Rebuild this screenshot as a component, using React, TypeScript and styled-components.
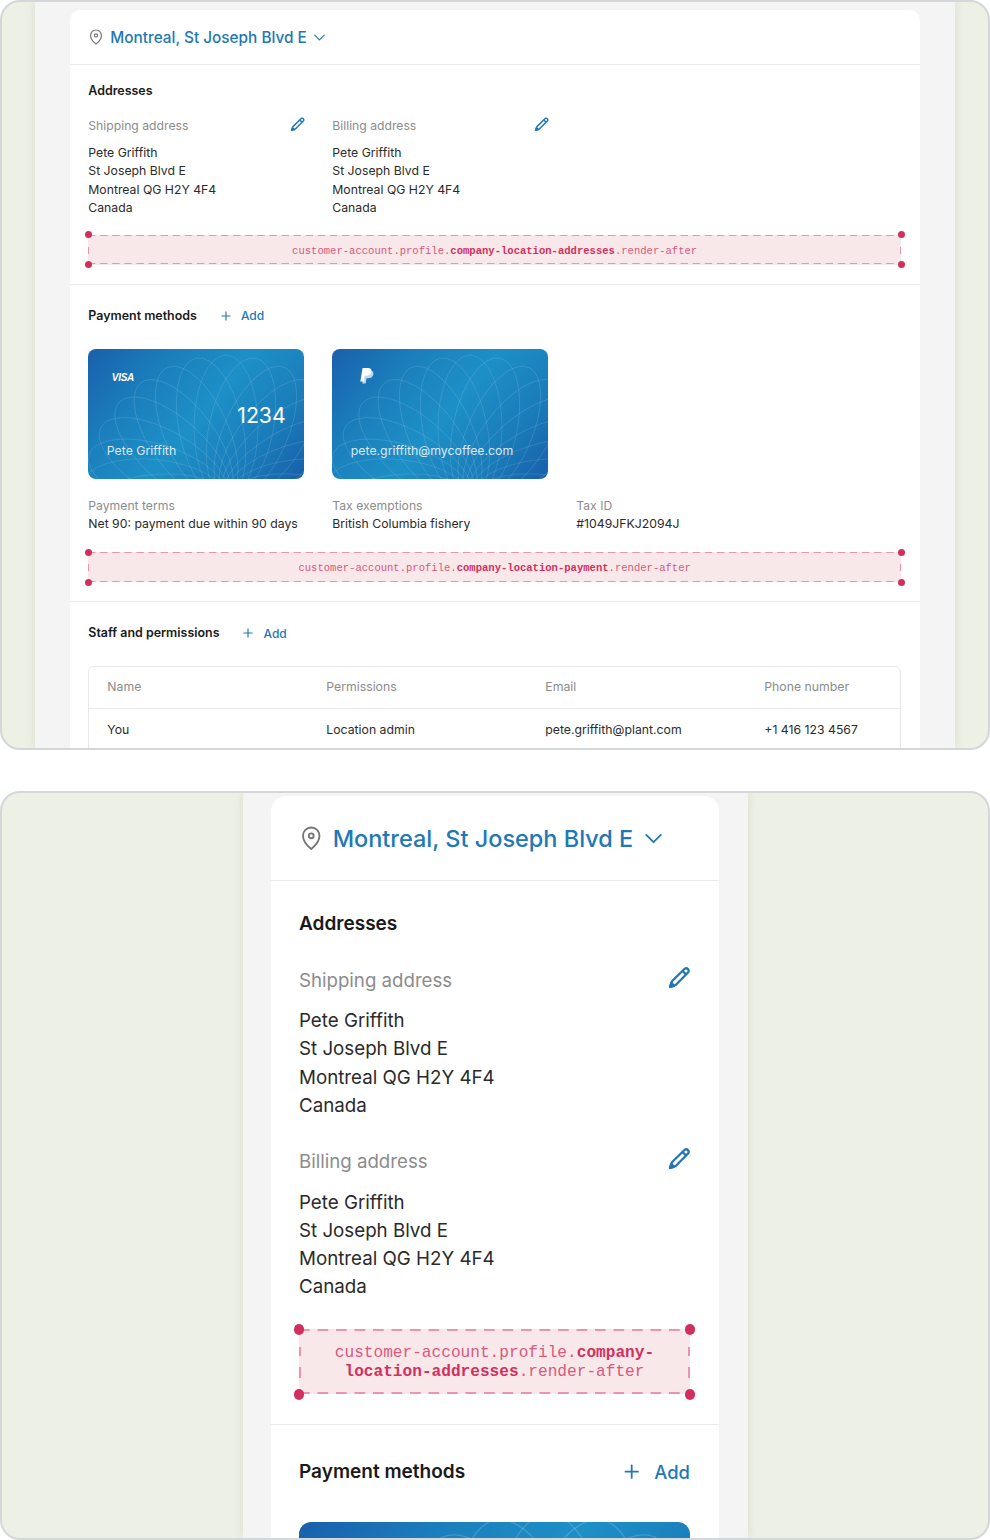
import React from "react";
import styled, { createGlobalStyle } from "styled-components";
import { ChevronDown, Plus } from "lucide-react";

const u = (n: number) => `calc(var(--s) * ${n}px)`;

const Global = createGlobalStyle`
  html, body { margin: 0; padding: 0; background: #fff; }
  * { box-sizing: border-box; }
  body { font-family: Inter, "Liberation Sans", sans-serif; }
`;

const Page = styled.div`
  width: 990px;
  display: flex;
  flex-direction: column;
  gap: 41px;
`;

const Frame = styled.section<{ $mobile?: boolean }>`
  --s: ${(p) => (p.$mobile ? 1.53 : 1)};
  --first: ${(p) => (p.$mobile ? "29px" : "17px")};
  --head: ${(p) => (p.$mobile ? "84px" : "54px")};
  --gap: ${(p) => (p.$mobile ? "29px" : "17px")};
  --banner-gap: ${(p) => (p.$mobile ? "28px" : "17px")};
  --label-gap: ${(p) => (p.$mobile ? "13px" : "9px")};
  --dash: #ea94ad;
  --side-dash: ${(p) =>
    p.$mobile
      ? "transparent 27%, var(--dash) 27% 42%, transparent 42% 59%, var(--dash) 59% 75%, transparent 75%"
      : "transparent 40%, var(--dash) 40% 63%, transparent 63%"};
  height: ${(p) => (p.$mobile ? "749px" : "750px")};
  border: 2px solid #d4d7d9;
  border-radius: 20px;
  background: #edf0e4;
  overflow: hidden;
  display: flex;
  justify-content: center;
  color: #242424;
`;

const Panel = styled.div<{ $mobile?: boolean }>`
  width: ${(p) => (p.$mobile ? "505px" : "920px")};
  margin-left: ${(p) => (p.$mobile ? "1px" : "0")};
  padding: ${(p) => (p.$mobile ? "3px 29px 0 28px" : "8px 35px 0")};
  background: #f4f4f4;
  box-shadow: 0 0 9px rgba(90, 100, 60, 0.14);
`;

const Card = styled.div`
  background: #fff;
  border-radius: ${u(10)} ${u(10)} 0 0;
  height: 100%;
`;

const Header = styled.header`
  height: calc(var(--head) + 1px);
  padding: 0 ${u(19)};
  display: flex;
  align-items: center;
  gap: ${u(6.3)};
  border-bottom: 1px solid #ebebeb;
  font-size: ${u(15.35)};
  font-weight: 500;
  color: #2178b5;
`;

const PinIcon = styled.svg`
  width: ${u(16)};
  height: ${u(16)};
  margin-left: ${u(-1)};
  fill: none;
  stroke: #747474;
  stroke-width: 1.2;
`;

const Chevron = styled(ChevronDown)`
  width: ${u(19)};
  height: ${u(19)};
  margin: ${u(1)} 0 0 ${u(-2.75)};
  color: #2178b5;
`;

const Block = styled.div<{ $first?: boolean }>`
  padding: ${(p) => (p.$first ? "var(--first)" : u(22))} ${u(19)} ${u(19)} ${u(18.3)};
  &:not(:last-child) {
    border-bottom: 1px solid #ebebeb;
  }
`;

const HeadingRow = styled.div<{ $mobile?: boolean }>`
  display: flex;
  align-items: center;
  justify-content: ${(p) => (p.$mobile ? "space-between" : "flex-start")};
  gap: ${u(22)};
  height: ${u(18)};
  margin-bottom: ${u(24)};
`;

const Heading = styled.h2<{ $tight?: boolean }>`
  margin: 0;
  height: ${u(18)};
  font-size: ${u(12.45)};
  line-height: ${u(18)};
  font-weight: 600;
  color: #1a1a1a;
  margin-bottom: ${(p) => (p.$tight ? "var(--gap)" : 0)};
`;

const AddButton = styled.span`
  display: flex;
  align-items: center;
  gap: ${u(8)};
  font-size: ${u(12)};
  font-weight: 500;
  color: #2178b5;
`;

const AddIcon = styled(Plus)`
  width: ${u(14)};
  height: ${u(14)};
`;

const AddressGrid = styled.div<{ $mobile?: boolean }>`
  display: grid;
  grid-template-columns: ${(p) => (p.$mobile ? "1fr" : "216px 216px")};
  column-gap: 28px;
  row-gap: 28px;
`;

const AddressHead = styled.div`
  display: flex;
  align-items: center;
  justify-content: space-between;
  height: ${u(18)};
  margin-bottom: var(--label-gap);
`;

const Label = styled.div`
  font-size: ${u(12.2)};
  line-height: ${u(18)};
  color: #8c8c8c;
`;

const Lines = styled.div`
  font-size: ${u(12.25)};
  line-height: ${u(18.45)};
  color: #2b2b2b;
`;

const PencilIcon = styled.svg`
  width: ${u(17)};
  height: ${u(17)};
  margin: ${u(-3)} ${u(-1.6)} 0 0;
  fill: none;
  stroke: #2178b5;
  stroke-width: 1.4;
  stroke-linejoin: round;
`;

const Banner = styled.div`
  position: relative;
  margin-top: var(--banner-gap);
  min-height: ${u(30)};
  padding: ${u(9.7)} ${u(20)} ${u(7.8)};
  display: flex;
  align-items: center;
  justify-content: center;
  text-align: center;
  font-family: "Liberation Mono", monospace;
  font-size: ${u(10.55)};
  line-height: ${u(12.5)};
  color: #d9587f;
  background-color: #f9e8ea;
  background-image:
    linear-gradient(to right, var(--dash) 58%, transparent 0),
    linear-gradient(to right, var(--dash) 58%, transparent 0),
    linear-gradient(to bottom, var(--side-dash)),
    linear-gradient(to bottom, var(--side-dash));
  background-size:
    ${u(12.1)} ${u(1.4)},
    ${u(12.1)} ${u(1.4)},
    ${u(1.4)} 100%,
    ${u(1.4)} 100%;
  background-position: 0 0, 0 100%, 0 0, 100% 0;
  background-repeat: repeat-x, repeat-x, no-repeat, no-repeat;
  & b {
    color: #d1305f;
    font-weight: 700;
  }
`;

const Dot = styled.i<{ $right?: boolean; $bottom?: boolean }>`
  position: absolute;
  width: ${u(7)};
  height: ${u(7)};
  border-radius: 50%;
  background: #d1305f;
  ${(p) => (p.$right ? "right" : "left")}: ${u(-3.5)};
  ${(p) => (p.$bottom ? "bottom" : "top")}: ${u(-3.5)};
`;

const CardRow = styled.div<{ $mobile?: boolean }>`
  display: grid;
  grid-template-columns: ${(p) => (p.$mobile ? "1fr" : "216px 216px")};
  gap: 28px;
`;

const PayCard = styled.div`
  position: relative;
  height: ${u(130)};
  padding: ${u(18.5)};
  border-radius: ${u(8)};
  overflow: hidden;
  display: flex;
  flex-direction: column;
  color: #fff;
  background: linear-gradient(130deg, #1960ab 0%, #1b80bd 28%, #1d8fc7 52%, #1a7cba 78%, #175fab 100%);
`;

const Pattern = styled.svg`
  position: absolute;
  inset: 0;
  width: 100%;
  height: 100%;
  fill: none;
  stroke: rgba(255, 255, 255, 0.17);
  stroke-width: 0.7;
`;

const CardTop = styled.div`
  position: relative;
  height: ${u(20)};
  display: flex;
  align-items: center;
`;

const VisaMark = styled.span`
  margin-left: ${u(5)};
  margin-top: ${u(1)};
  font-family: "Liberation Sans", sans-serif;
  font-size: ${u(10)};
  font-style: italic;
  font-weight: 700;
  letter-spacing: ${u(-0.3)};
`;

const PayPalIcon = styled.svg`
  width: ${u(16)};
  height: ${u(20)};
  margin-left: ${u(8)};
`;

const CardNumber = styled.div`
  position: relative;
  align-self: flex-end;
  margin-top: ${u(15)};
  font-size: ${u(21.3)};
  line-height: ${u(26)};
`;

const CardOwner = styled.div`
  position: relative;
  margin-top: auto;
  font-size: ${u(12.3)};
  line-height: ${u(18)};
  opacity: 0.82;
`;

const InfoGrid = styled.div`
  display: grid;
  grid-template-columns: 216px 216px 216px;
  column-gap: 28px;
  margin-top: 18px;
  padding-bottom: 2px;
`;

const Table = styled.div`
  border: 1px solid #e8e8e8;
  border-radius: ${u(6)} ${u(6)} 0 0;
`;

const TableRow = styled.div`
  display: grid;
  grid-template-columns: 219px 219px 219px 1fr;
  align-items: center;
  height: 42px;
  padding: 0 18px 1px;
  font-size: ${u(12.25)};
  &:not(:last-child) {
    border-bottom: 1px solid #e8e8e8;
  }
`;

const HeadCell = styled.div`
  margin-top: -1px;
  color: #8c8c8c;
`;

const Cell = styled.div`
  color: #2b2b2b;
`;

const Pencil = () => (
  <PencilIcon viewBox="0 0 16 16" aria-hidden>
    <path d="M11.5 2.3a1.6 1.6 0 0 1 2.2 2.2L6 12.3l-3.5 1.2 1.2-3.5z" />
    <path d="M10.2 3.7l2.1 2.1" />
    <path d="M3.2 11l1.8 1.8-2.5.7z" fill="#2178b5" />
  </PencilIcon>
);

const Pin = () => (
  <PinIcon viewBox="0 0 16 16" aria-hidden>
    <path d="M8 1a5.4 5.4 0 0 0-5.4 5.4c0 3.6 3.6 7.2 5.4 8.6 1.8-1.4 5.4-5 5.4-8.6A5.4 5.4 0 0 0 8 1z" />
    <circle cx="8" cy="6.4" r="1.6" />
  </PinIcon>
);

const angles = Array.from({ length: 17 }, (_, i) => -96 + i * 12);

const CardPattern = () => (
  <Pattern viewBox="0 0 216 130" preserveAspectRatio="xMidYMid slice" aria-hidden>
    {angles.map((a) => (
      <ellipse key={a} cx={138} cy={78} rx={32} ry={72} transform={`rotate(${a} 138 150)`} />
    ))}
  </Pattern>
);

const Add = () => (
  <AddButton>
    <AddIcon strokeWidth={2} />
    Add
  </AddButton>
);

const Corners = () => (
  <>
    <Dot />
    <Dot $right />
    <Dot $bottom />
    <Dot $right $bottom />
  </>
);

const Extension = ({ name }: { name: string }) => (
  <Banner>
    <Corners />
    <span>
      customer-account.profile.<b>{name}</b>.render-after
    </span>
  </Banner>
);

const address = (
  <Lines>
    Pete Griffith
    <br />
    St Joseph Blvd E
    <br />
    Montreal QG H2Y 4F4
    <br />
    Canada
  </Lines>
);

const Addresses = ({ mobile }: { mobile?: boolean }) => (
  <Block $first>
    <Heading $tight>Addresses</Heading>
    <AddressGrid $mobile={mobile}>
      <div>
        <AddressHead>
          <Label>Shipping address</Label>
          <Pencil />
        </AddressHead>
        {address}
      </div>
      <div>
        <AddressHead>
          <Label>Billing address</Label>
          <Pencil />
        </AddressHead>
        {address}
      </div>
    </AddressGrid>
    <Extension name="company-location-addresses" />
  </Block>
);

const LocationHeader = () => (
  <Header>
    <Pin />
    Montreal, St Joseph Blvd E
    <Chevron strokeWidth={1.5} />
  </Header>
);

const VisaCard = () => (
  <PayCard>
    <CardPattern />
    <CardTop>
      <VisaMark>VISA</VisaMark>
    </CardTop>
    <CardNumber>1234</CardNumber>
    <CardOwner>Pete Griffith</CardOwner>
  </PayCard>
);

const PayPalCard = () => (
  <PayCard>
    <CardPattern />
    <CardTop>
      <PayPalIcon viewBox="0 0 16 20" aria-hidden>
        <path
          d="M5.6 3.4h5.2c2.6 0 4.1 1.4 3.6 3.8-.5 2.7-2.5 4-5 4H7.5l-.8 5.4H3.3z"
          fill="#fff"
          opacity="0.72"
        />
        <path d="M3.6 1h5.4c2.6 0 3.9 1.3 3.4 3.7-.5 2.7-2.5 4.1-5 4.1H5.6l-.9 5.6H1.3z" fill="#fff" />
      </PayPalIcon>
    </CardTop>
    <CardOwner>pete.griffith@mycoffee.com</CardOwner>
  </PayCard>
);

export default function App() {
  return (
    <Page>
      <Global />
      <Frame>
        <Panel>
          <Card>
            <LocationHeader />
            <Addresses />
            <Block>
              <HeadingRow>
                <Heading>Payment methods</Heading>
                <Add />
              </HeadingRow>
              <CardRow>
                <VisaCard />
                <PayPalCard />
              </CardRow>
              <InfoGrid>
                <div>
                  <Label>Payment terms</Label>
                  <Lines>Net 90: payment due within 90 days</Lines>
                </div>
                <div>
                  <Label>Tax exemptions</Label>
                  <Lines>British Columbia fishery</Lines>
                </div>
                <div>
                  <Label>Tax ID</Label>
                  <Lines>#1049JFKJ2094J</Lines>
                </div>
              </InfoGrid>
              <Extension name="company-location-payment" />
            </Block>
            <Block>
              <HeadingRow>
                <Heading>Staff and permissions</Heading>
                <Add />
              </HeadingRow>
              <Table>
                <TableRow>
                  <HeadCell>Name</HeadCell>
                  <HeadCell>Permissions</HeadCell>
                  <HeadCell>Email</HeadCell>
                  <HeadCell>Phone number</HeadCell>
                </TableRow>
                <TableRow>
                  <Cell>You</Cell>
                  <Cell>Location admin</Cell>
                  <Cell>pete.griffith@plant.com</Cell>
                  <Cell>+1 416 123 4567</Cell>
                </TableRow>
              </Table>
            </Block>
          </Card>
        </Panel>
      </Frame>
      <Frame $mobile>
        <Panel $mobile>
          <Card>
            <LocationHeader />
            <Addresses mobile />
            <Block>
              <HeadingRow $mobile>
                <Heading>Payment methods</Heading>
                <Add />
              </HeadingRow>
              <CardRow $mobile>
                <VisaCard />
              </CardRow>
            </Block>
          </Card>
        </Panel>
      </Frame>
    </Page>
  );
}
